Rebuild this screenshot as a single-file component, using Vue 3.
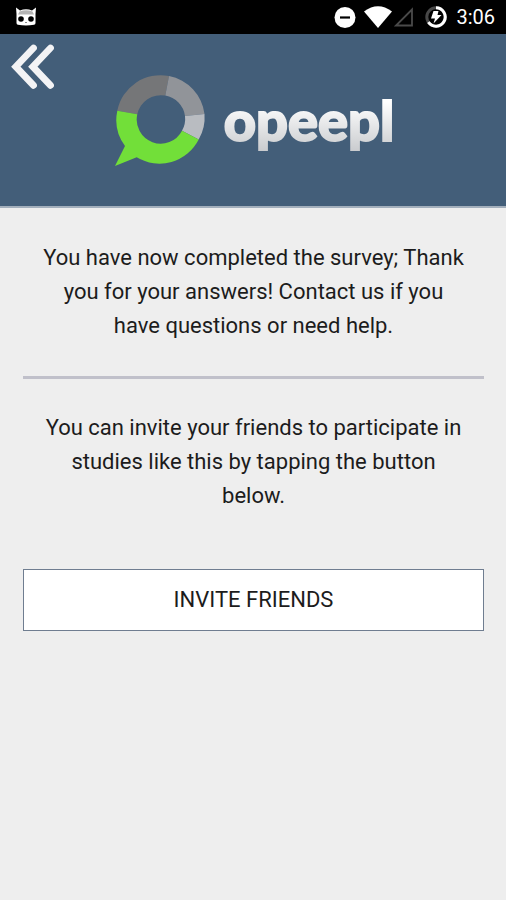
<template>
  <div class="screen">

    <!-- STATUS BAR -->
    <div class="status">
      <svg class="status__cat" viewBox="0 0 22 20" width="22" height="20" aria-hidden="true">
        <path d="M1 0.5 L5 3.5 Q11 1.2 17 3.5 L21 0.5 L20.5 7 V16 Q20.5 17.5 19 17.7 Q11 19.3 3 17.7 Q1.5 17.5 1.5 16 V7 Z" fill="#fff" />
        <path d="M4.5 4.5 Q11 1.8 17.5 4.5 L19 7.5 H3 Z" fill="#b4b4b4" />
        <circle cx="6" cy="12" r="2.8" fill="#000" />
        <circle cx="16" cy="12" r="2.8" fill="#000" />
        <path d="M10 15.5 H12" stroke="#888" stroke-width="1.2" />
      </svg>

      <div class="status__icons">
        <svg viewBox="0 0 22 22" width="22" height="22" aria-hidden="true">
          <circle cx="11" cy="11.5" r="10.5" fill="#fff" />
          <path d="M6 11.5 H16" stroke="#000" stroke-width="2.2" />
        </svg>
        <svg class="status__wifi" viewBox="0 0 28 22" width="28" height="22" aria-hidden="true">
          <path d="M0 5.5 Q14 -5 28 5.5 L14 22 Z" fill="#fff" />
        </svg>
        <svg class="status__signal" viewBox="0 0 20 20" width="20" height="20" aria-hidden="true">
          <path d="M18 2.5 V18.5 H2 Z" fill="none" stroke="#4a4a4a" stroke-width="1.8" />
        </svg>
        <svg class="status__battery" viewBox="0 0 22 22" width="22" height="22" aria-hidden="true">
          <circle cx="11" cy="11" r="9.2" fill="none" stroke="#484848" stroke-width="3" />
          <path d="M11 1.8 A9.2 9.2 0 1 1 3.4 16.2" fill="none" stroke="#fff" stroke-width="3" />
          <path d="M8.5 5 H13.5 L12.5 9 H16.5 L8.5 17.5 L10 12.5 H6 Z" fill="#fff" />
        </svg>
        <span class="status__time">{{ time }}</span>
      </div>
    </div>

    <!-- HEADER -->
    <header class="header">
      <button class="back" type="button" aria-label="Back">
        <svg viewBox="0 0 44 46" width="44" height="46" aria-hidden="true">
          <path
            d="M22.5 4 L4.8 22.7 L22.5 41.4 M39.5 4 L21.8 22.7 L39.5 41.4"
            fill="none" stroke="#f3f3f5" stroke-width="6.8"
            stroke-linecap="round" stroke-linejoin="miter"
          />
        </svg>
      </button>

      <div class="brand">
        <svg viewBox="0 0 92 92" width="92" height="92" aria-hidden="true">
          <path d="M3.3 35.7 A44 44 0 0 1 55 1 L51.3 20.6 A24 24 0 0 0 23.3 39.3 Z" fill="#757678" />
          <path d="M55 1 A44 44 0 0 1 90.5 39 L71 41 A24 24 0 0 0 51.3 20.6 Z" fill="#919499" />
          <path d="M90.5 39 A44 44 0 0 1 84.7 64.5 L68 55.7 A24 24 0 0 0 71 41 Z" fill="#b9bcc1" />
          <path d="M84.7 64.5 A44 44 0 0 1 22.7 82.3 L1 91 L11 71 A44 44 0 0 1 3.3 35.7 L23.3 39.3 A24 24 0 0 0 68 55.7 Z" fill="#72df39" />
        </svg>
        <span class="brand__name">opeepl</span>
      </div>
    </header>

    <!-- CONTENT -->
    <main class="content">
      <p>You have now completed the survey; Thank you for your answers! Contact us if you have questions or need help.</p>
      <hr class="divider">
      <p>You can invite your friends to participate in studies like this by tapping the button below.</p>
      <button class="invite" type="button" @click="inviteFriends">INVITE FRIENDS</button>
    </main>

  </div>
</template>

<script setup>
import { ref } from "vue"

const time = ref("3:06")

const emit = defineEmits(["invite"])

const inviteFriends = () => emit("invite")
</script>

<style>
body {
  margin: 0;
  background: #eee;
}
</style>

<style scoped>
.screen {
  min-height: 100vh;
  background: #eee;
  color: #1c1c1c;
  font-family: Roboto, "Liberation Sans", sans-serif;
}

/* STATUS BAR */
.status {
  display: flex;
  justify-content: space-between;
  align-items: center;
  height: 34px;
  padding: 0 11px 0 15px;
  background: #000;
  color: #fff;
}

.status__icons {
  display: flex;
  align-items: center;
}

.status__wifi {
  margin-left: 8px;
}

.status__signal {
  margin-left: 2px;
}

.status__battery {
  margin-left: 11px;
}

.status__time {
  margin-left: 9px;
  font-size: 20px;
  line-height: 34px;
}

/* HEADER */
.header {
  display: grid;
  padding: 10px 9px 39px 11px;
  background: #435e79;
  border-bottom: 2px solid #a3afbc;
}

.back {
  grid-area: 1 / 1;
  place-self: start;
  display: flex;
  padding: 0;
  border: 0;
  background: none;
  cursor: pointer;
}

.brand {
  grid-area: 1 / 1;
  justify-self: center;
  display: flex;
  align-items: flex-start;
  gap: 18px;
  padding-top: 31px;
}

.brand__name {
  font-family: Lato, "Open Sans", sans-serif;
  font-size: 56px;
  font-weight: 900;
  line-height: 90px;
  color: transparent;
  background: linear-gradient(#fff 30%, #c9cbce 85%);
  background-clip: text;
  -webkit-text-stroke: 2px transparent;
}

/* CONTENT */
.content {
  padding: 33px 22px 33px 23px;
  text-align: center;
}

.content p {
  margin: 0;
  padding: 0 16px;
  font-size: 22px;
  line-height: 34px;
}

.divider {
  height: 3px;
  margin: 33px 0 32px;
  border: 0;
  background: #c0c0ca;
}

.invite {
  display: block;
  width: 100%;
  margin-top: 56px;
  padding: 13px;
  border: 1px solid #6f7d90;
  background: #fff;
  color: #1c1c1c;
  font-family: inherit;
  font-size: 22px;
  line-height: 34px;
  cursor: pointer;
}
</style>
